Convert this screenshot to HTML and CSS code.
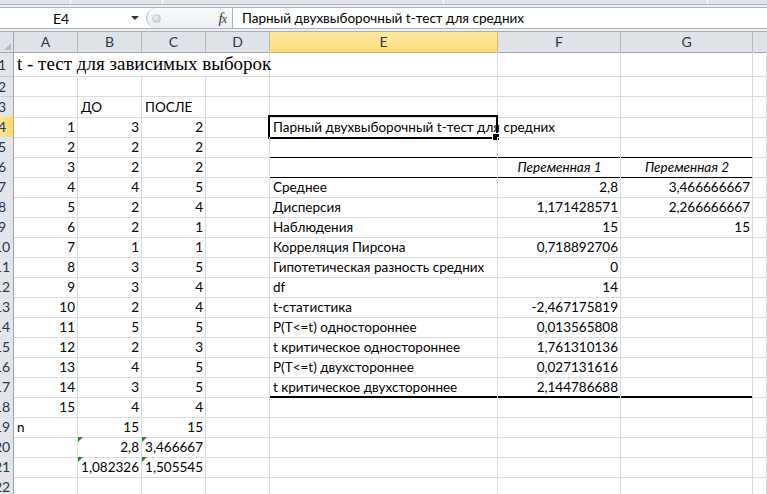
FILE: index.html
```html
<!DOCTYPE html>
<html lang="ru">
<head>
<meta charset="utf-8">
<title>t-тест</title>
<link rel="stylesheet" href="styles.css">
</head>
<body>
<div class="top"><span class="tk t1"></span><span class="tk t2"></span><span class="tk t3"></span><span class="tk t4"></span></div>
<div class="fwrap">
  <div class="fbar">
    <div class="namebox"><span class="nbtext">E4</span><span class="nbarrow"></span></div>
    <div class="mid"><span class="grip"></span><span class="fx"><i>f</i><i class="x">x</i></span></div>
    <div class="formula">Парный двухвыборочный t-тест для средних</div>
  </div>
</div>
<div class="sheet">
  <div class="r hdr">
    <div class="corner"></div>
    <div class="ch">A</div><div class="ch">B</div><div class="ch">C</div><div class="ch">D</div>
    <div class="ch act">E</div><div class="ch">F</div><div class="ch">G</div><div class="ch last"></div>
  </div>
  <div class="r r1">
    <div class="rh"><span>1</span></div>
    <div class="c title s4">t - тест для зависимых выборок</div>
    <div class="c"></div><div class="c"></div><div class="c"></div><div class="c"></div>
  </div>
  <div class="r">
    <div class="rh"><span>2</span></div>
    <div class="c"></div><div class="c"></div><div class="c"></div><div class="c"></div><div class="c"></div><div class="c"></div><div class="c"></div><div class="c"></div>
  </div>
  <div class="r">
    <div class="rh"><span>3</span></div>
    <div class="c"></div><div class="c">ДО</div><div class="c">ПОСЛЕ</div><div class="c"></div><div class="c"></div><div class="c"></div><div class="c"></div><div class="c"></div>
  </div>
  <div class="r">
    <div class="rh act"><span>4</span></div>
    <div class="c n">1</div><div class="c n">3</div><div class="c n">2</div><div class="c"></div>
    <div class="c sel">Парный двухвыборочный t-тест для средних</div><div class="c"></div><div class="c"></div><div class="c"></div>
  </div>
  <div class="r">
    <div class="rh"><span>5</span></div>
    <div class="c n">2</div><div class="c n">2</div><div class="c n">2</div><div class="c"></div>
    <div class="c tb"></div><div class="c tb"></div><div class="c tb"></div><div class="c"></div>
  </div>
  <div class="r">
    <div class="rh"><span>6</span></div>
    <div class="c n">3</div><div class="c n">2</div><div class="c n">2</div><div class="c"></div>
    <div class="c hrow"></div><div class="c hrow ctr"><i>Переменная 1</i></div><div class="c hrow ctr"><i>Переменная 2</i></div><div class="c"></div>
  </div>
  <div class="r">
    <div class="rh"><span>7</span></div>
    <div class="c n">4</div><div class="c n">4</div><div class="c n">5</div><div class="c"></div>
    <div class="c">Среднее</div><div class="c n">2,8</div><div class="c n">3,466666667</div><div class="c"></div>
  </div>
  <div class="r">
    <div class="rh"><span>8</span></div>
    <div class="c n">5</div><div class="c n">2</div><div class="c n">4</div><div class="c"></div>
    <div class="c">Дисперсия</div><div class="c n">1,171428571</div><div class="c n">2,266666667</div><div class="c"></div>
  </div>
  <div class="r">
    <div class="rh"><span>9</span></div>
    <div class="c n">6</div><div class="c n">2</div><div class="c n">1</div><div class="c"></div>
    <div class="c">Наблюдения</div><div class="c n">15</div><div class="c n">15</div><div class="c"></div>
  </div>
  <div class="r">
    <div class="rh"><span>10</span></div>
    <div class="c n">7</div><div class="c n">1</div><div class="c n">1</div><div class="c"></div>
    <div class="c">Корреляция Пирсона</div><div class="c n">0,718892706</div><div class="c"></div><div class="c"></div>
  </div>
  <div class="r">
    <div class="rh"><span>11</span></div>
    <div class="c n">8</div><div class="c n">3</div><div class="c n">5</div><div class="c"></div>
    <div class="c">Гипотетическая разность средних</div><div class="c n">0</div><div class="c"></div><div class="c"></div>
  </div>
  <div class="r">
    <div class="rh"><span>12</span></div>
    <div class="c n">9</div><div class="c n">3</div><div class="c n">4</div><div class="c"></div>
    <div class="c">df</div><div class="c n">14</div><div class="c"></div><div class="c"></div>
  </div>
  <div class="r">
    <div class="rh"><span>13</span></div>
    <div class="c n">10</div><div class="c n">2</div><div class="c n">4</div><div class="c"></div>
    <div class="c">t-статистика</div><div class="c n">-2,467175819</div><div class="c"></div><div class="c"></div>
  </div>
  <div class="r">
    <div class="rh"><span>14</span></div>
    <div class="c n">11</div><div class="c n">5</div><div class="c n">5</div><div class="c"></div>
    <div class="c">P(T&lt;=t) одностороннее</div><div class="c n">0,013565808</div><div class="c"></div><div class="c"></div>
  </div>
  <div class="r">
    <div class="rh"><span>15</span></div>
    <div class="c n">12</div><div class="c n">2</div><div class="c n">3</div><div class="c"></div>
    <div class="c">t критическое одностороннее</div><div class="c n">1,761310136</div><div class="c"></div><div class="c"></div>
  </div>
  <div class="r">
    <div class="rh"><span>16</span></div>
    <div class="c n">13</div><div class="c n">4</div><div class="c n">5</div><div class="c"></div>
    <div class="c">P(T&lt;=t) двухстороннее</div><div class="c n">0,027131616</div><div class="c"></div><div class="c"></div>
  </div>
  <div class="r">
    <div class="rh"><span>17</span></div>
    <div class="c n">14</div><div class="c n">3</div><div class="c n">5</div><div class="c"></div>
    <div class="c bb">t критическое двухстороннее</div><div class="c n bb">2,144786688</div><div class="c bb"></div><div class="c"></div>
  </div>
  <div class="r">
    <div class="rh"><span>18</span></div>
    <div class="c n">15</div><div class="c n">4</div><div class="c n">4</div><div class="c"></div>
    <div class="c"></div><div class="c"></div><div class="c"></div><div class="c"></div>
  </div>
  <div class="r">
    <div class="rh"><span>19</span></div>
    <div class="c">n</div><div class="c n">15</div><div class="c n">15</div><div class="c"></div>
    <div class="c"></div><div class="c"></div><div class="c"></div><div class="c"></div>
  </div>
  <div class="r">
    <div class="rh"><span>20</span></div>
    <div class="c"></div><div class="c n tri">2,8</div><div class="c n tri">3,466667</div><div class="c"></div>
    <div class="c"></div><div class="c"></div><div class="c"></div><div class="c"></div>
  </div>
  <div class="r">
    <div class="rh"><span>21</span></div>
    <div class="c"></div><div class="c n tri">1,082326</div><div class="c n tri">1,505545</div><div class="c"></div>
    <div class="c"></div><div class="c"></div><div class="c"></div><div class="c"></div>
  </div>
  <div class="r">
    <div class="rh"><span>22</span></div>
    <div class="c"></div><div class="c"></div><div class="c"></div><div class="c"></div><div class="c"></div><div class="c"></div><div class="c"></div><div class="c"></div>
  </div>
</div>
</body>
</html>
```
FILE: styles.css
```css
* { box-sizing: border-box; }
html, body { margin: 0; padding: 0; }
body {
  width: 767px;
  height: 494px;
  overflow: hidden;
  background: #fff;
  font-family: "Lato", "Noto Sans", sans-serif;
  font-size: 13.5px;
  color: #000;
}

/* ribbon remnant */
.top {
  position: relative;
  height: 5px;
  background: #dfe3e8;
  border-bottom: 1px solid #aeb4bc;
}
.tk { position: absolute; top: 0; width: 1px; height: 4px; background: #fff; }
.t1 { left: 70px; }
.t2 { left: 162px; }
.t3 { left: 443px; }
.t4 { left: 707px; }

/* formula bar */
.fwrap {
  padding: 2px 0;
  background: #eef0f3;
  height: 26px;
}
.fbar {
  display: flex;
  height: 22px;
  background: #fff;
  border-top: 1px solid #a9b0b8;
  border-bottom: 1px solid #a9b0b8;
}
.namebox {
  width: 146px;
  display: flex;
  align-items: center;
  color: #000;
}
.nbtext {
  width: 122px;
  text-align: center;
  font-size: 14px;
}
.nbarrow {
  margin-left: 9px;
  width: 0;
  height: 0;
  border-left: 4px solid transparent;
  border-right: 4px solid transparent;
  border-top: 4px solid #333;
}
.mid {
  width: 86px;
  display: flex;
  align-items: center;
  justify-content: space-between;
  padding: 0 6px 0 5px;
  background: linear-gradient(#fbfbfc, #eceef1);
  border-left: 1px solid #b7bdc5;
  border-radius: 11px 0 0 11px;
}
.grip {
  width: 9px;
  height: 9px;
  border-radius: 50%;
  background: radial-gradient(circle at 40% 35%, #f2f3f5, #bfc4ca);
  border: 1px solid #c4c8ce;
}
.fx {
  font-family: "Liberation Serif", serif;
  font-size: 15px;
  color: #333;
  letter-spacing: -1px;
}
.fx .x { font-size: 12px; }
.formula {
  flex: 1;
  padding-left: 9px;
  line-height: 20px;
  border-left: 1px solid #a9b0b8;
  white-space: nowrap;
}

/* sheet */
.sheet { display: flex; flex-direction: column; }
.r {
  display: grid;
  grid-template-columns: 14px 64px 64px 64px 64px 228px 123px 132px 1fr;
  height: 20px;
}
.r.hdr {
  height: 21px;
  border-top: 1px solid #a9aeb4;
}
.r.r1 { height: 25px; }

.corner {
  background: #dfe3e8;
  border-right: 1px solid #9ea4ab;
  border-bottom: 1px solid #9ea4ab;
  position: relative;
}
.corner::after {
  content: "";
  position: absolute;
  right: 2px;
  bottom: 2px;
  border-left: 7px solid transparent;
  border-bottom: 7px solid #b7bcc2;
}
.ch {
  background: #dfe3e8;
  border-right: 1px solid #b3b8be;
  border-bottom: 1px solid #9ea4ab;
  text-align: center;
  line-height: 20px;
  color: #283849;
  font-size: 14px;
}
.ch.act {
  background: linear-gradient(#fde9a3, #fbdd7a);
  border-right-color: #e2b85a;
  border-bottom: 1px solid #f2a43a;
}
.ch.last { border-right: none; }

.rh {
  background: #e2e6eb;
  border-right: 1px solid #9ea4ab;
  border-bottom: 1px solid #c6cbd1;
  overflow: hidden;
  color: #283849;
  line-height: 20px;
  font-size: 14px;
}
.rh span {
  display: block;
  width: 28px;
  margin-left: -12px;
  text-align: center;
}
.r1 .rh { line-height: 25px; }
.rh.act {
  background: linear-gradient(90deg, #fde49a, #fbd870);
  border-right-color: #f2a43a;
}

.c {
  position: relative;
  border-right: 1px solid #dadcdd;
  border-bottom: 1px solid #dadcdd;
  padding: 1px 2px 0 3px;
  line-height: 19px;
  white-space: nowrap;
  overflow: visible;
}
.c.n { text-align: right; }
.c.ctr { text-align: center; }
.s4 { grid-column: span 4; }
.title {
  font-family: "Liberation Serif", serif;
  font-size: 19px;
  line-height: 24px;
  padding: 0 0 0 3px;
}

/* analysis borders */
.c.tb { border-bottom-color: #000; }
.c.hrow { box-shadow: inset 0 1px 0 #000; border-bottom-color: #000; }
.c.bb { border-bottom-color: #000; box-shadow: inset 0 -1px 0 #000; }

/* active cell */
.c.sel { border-right-color: transparent; }
.c.sel::before {
  content: "";
  position: absolute;
  left: -2px;
  top: -2px;
  right: -1px;
  bottom: -2px;
  border: 2px solid #000;
  pointer-events: none;
}
.c.sel::after {
  content: "";
  position: absolute;
  right: -3px;
  bottom: -4px;
  width: 6px;
  height: 6px;
  background: #000;
  border: 1px solid #fff;
}

/* green error triangles */
.c.tri::before {
  content: "";
  position: absolute;
  left: 0;
  top: 0;
  border-top: 5px solid #1b8a1b;
  border-right: 5px solid transparent;
}
```
